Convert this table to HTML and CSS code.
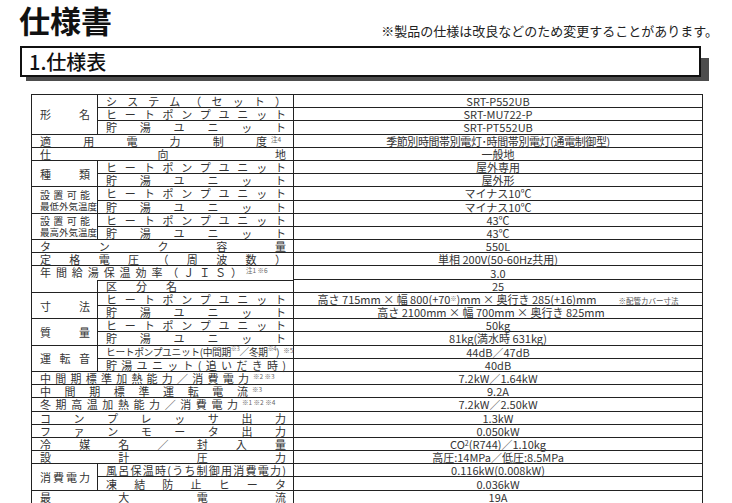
FILE: index.html
```html
<!DOCTYPE html>
<html lang="ja">
<head>
<meta charset="utf-8">
<title>仕様書</title>
<link rel="stylesheet" href="styles.css">
</head>
<body>
<header class="top">
  <h1 class="title">仕様書</h1>
  <p class="notice">※製品の仕様は改良などのため変更することがあります。</p>
</header>
<h2 class="section">1.仕様表</h2>
<div class="spec">
  <div class="c r3"><span class="j">形名</span></div>
  <div class="c"><span class="j">システム（セット）</span></div>
  <div class="c v">SRT-P552UB</div>
  <div class="c"><span class="j">ヒートポンプユニット</span></div>
  <div class="c v">SRT-MU722-P</div>
  <div class="c"><span class="j">貯湯ユニット</span></div>
  <div class="c v">SRT-PT552UB</div>

  <div class="c w"><span class="j">適用電力制度</span><span class="n n19">注4</span></div>
  <div class="c v"><span class="cond">季節別時間帯別電灯･時間帯別電灯(通電制御型)</span></div>

  <div class="c w"><span class="j">仕向地</span></div>
  <div class="c v">一般地</div>

  <div class="c r2"><span class="j">種類</span></div>
  <div class="c"><span class="j">ヒートポンプユニット</span></div>
  <div class="c v">屋外専用</div>
  <div class="c"><span class="j">貯湯ユニット</span></div>
  <div class="c v">屋外形</div>

  <div class="c r2 two"><span class="j a">設置可能</span><span class="j b">最低外気温度</span></div>
  <div class="c"><span class="j">ヒートポンプユニット</span></div>
  <div class="c v">マイナス10℃</div>
  <div class="c"><span class="j">貯湯ユニット</span></div>
  <div class="c v">マイナス10℃</div>

  <div class="c r2 two"><span class="j a">設置可能</span><span class="j b">最高外気温度</span></div>
  <div class="c"><span class="j">ヒートポンプユニット</span></div>
  <div class="c v">43℃</div>
  <div class="c"><span class="j">貯湯ユニット</span></div>
  <div class="c v">43℃</div>

  <div class="c w"><span class="j">タンク容量</span></div>
  <div class="c v">550L</div>

  <div class="c w"><span class="j">定格電圧（周波数）</span></div>
  <div class="c v">単相 200V(50-60Hz共用)</div>

  <div class="c w nb"><span class="j">年間給湯保温効率（ＪＩＳ）</span><span class="n n44">注1 ※6</span></div>
  <div class="c v">3.0</div>
  <div class="c"></div>
  <div class="c kb"><span class="sp">区分名</span></div>
  <div class="c v">25</div>

  <div class="c r2"><span class="j">寸法</span></div>
  <div class="c"><span class="j">ヒートポンプユニット</span></div>
  <div class="c v">高さ 715mm × 幅 800(+70<sup>※</sup>)mm × 奥行き 285(+16)mm<span class="pipe">※配管カバー寸法</span></div>
  <div class="c"><span class="j">貯湯ユニット</span></div>
  <div class="c v shift">高さ 2100mm × 幅 700mm × 奥行き 825mm</div>

  <div class="c r2"><span class="j">質量</span></div>
  <div class="c"><span class="j">ヒートポンプユニット</span></div>
  <div class="c v">50kg</div>
  <div class="c"><span class="j">貯湯ユニット</span></div>
  <div class="c v">81kg(満水時 631kg)</div>

  <div class="c r2"><span class="j">運転音</span></div>
  <div class="c"><span class="tight">ヒートポンプユニット(中間期<sup>※3</sup>／冬期<sup>※4</sup>)</span><span class="n n5">※5</span></div>
  <div class="c v">44dB／47dB</div>
  <div class="c"><span class="j">貯湯ユニット(追いだき時)</span></div>
  <div class="c v">40dB</div>

  <div class="c w"><span class="j">中間期標準加熱能力／消費電力</span><span class="n n37">※2 ※3</span></div>
  <div class="c v">7.2kW／1.64kW</div>
  <div class="c w"><span class="j">中間期標準運転電流</span><span class="n n38">※3</span></div>
  <div class="c v">9.2A</div>
  <div class="c w"><span class="j">冬期高温加熱能力／消費電力</span><span class="n n48">※1 ※2 ※4</span></div>
  <div class="c v">7.2kW／2.50kW</div>
  <div class="c w"><span class="j">コンプレッサ出力</span></div>
  <div class="c v">1.3kW</div>
  <div class="c w"><span class="j">ファンモータ出力</span></div>
  <div class="c v">0.050kW</div>
  <div class="c w"><span class="j">冷媒名／封入量</span></div>
  <div class="c v">CO<sub>2</sub>(R744)／1.10kg</div>
  <div class="c w"><span class="j">設計圧力</span></div>
  <div class="c v">高圧:14MPa／低圧:8.5MPa</div>

  <div class="c r2"><span class="j">消費電力</span></div>
  <div class="c"><span class="j">風呂保温時(うち制御用消費電力)</span></div>
  <div class="c v">0.116kW(0.008kW)</div>
  <div class="c"><span class="j">凍結防止ヒータ</span></div>
  <div class="c v">0.036kW</div>

  <div class="c w"><span class="j">最大電流</span></div>
  <div class="c v">19A</div>
</div>
</body>
</html>
```

FILE: styles.css
```css
* {
  box-sizing: border-box;
  margin: 0;
  padding: 0;
}

html {
  background: #fff;
}

body {
  width: 732px;
  font-family: "Noto Sans CJK JP", "Noto Sans", sans-serif;
  color: #222;
}

.top {
  display: flex;
  align-items: flex-start;
  height: 40px;
  padding: 0 14px 0 19px;
}

.title {
  font-size: 31px;
  line-height: 40px;
  font-weight: 700;
  color: #111;
}

.notice {
  margin-left: auto;
  margin-top: 24px;
  font-size: 13px;
  line-height: 13px;
  color: #222;
}

.section {
  position: relative;
  margin: 6px 0 0 20px;
  width: 681px;
  height: 31px;
  border: 2px solid #111;
  background: #fff;
  padding-left: 7px;
  font-size: 20px;
  line-height: 27px;
  font-weight: 500;
  color: #111;
}

.section::before {
  content: "";
  position: absolute;
  left: 4px;
  top: 10px;
  right: -10px;
  bottom: -6px;
  background: #4d4d4d;
  z-index: -1;
}

.spec {
  display: grid;
  grid-template-columns: 66px 196px 409px;
  grid-template-rows: repeat(31, 13.2px);
  width: 672px;
  margin: 17px 0 0 31px;
  border-top: 1px solid #222;
  border-left: 1px solid #222;
  font-size: 11px;
  line-height: 12px;
  color: #333;
}

.c {
  display: flex;
  align-items: center;
  min-width: 0;
  padding: 0 7px 0 8px;
  border-right: 1px solid #222;
  border-bottom: 1px solid #222;
  white-space: nowrap;
}

.r2 { grid-row: span 2; }
.r3 { grid-row: span 3; }
.w { grid-column: span 2; }
.nb { border-bottom: none; align-items: flex-start; }
.kb { border-top: 1px solid #222; }

.j {
  flex: 1;
  text-align: justify;
  text-align-last: justify;
}

.two {
  flex-direction: column;
  align-items: stretch;
  justify-content: center;
}

.two .j {
  flex: none;
}

.two .a {
  font-size: 10px;
  line-height: 12px;
}

.two .b {
  font-size: 9.5px;
  line-height: 11px;
}

.n {
  flex: none;
  align-self: flex-start;
  padding: 1px 0 0 4px;
  font-size: 6.5px;
  line-height: 7px;
  color: #666;
}

.n19 { width: 19px; }
.n44 { width: 44px; }
.n37 { width: 37px; }
.n38 { width: 38px; }
.n48 { width: 48px; }
.n5 { margin-left: auto; }

.sp {
  letter-spacing: 19px;
}

.tight {
  font-size: 9.75px;
  letter-spacing: -0.35px;
}

.cond {
  letter-spacing: -0.4px;
}

sup {
  font-size: 6px;
  line-height: 1;
  vertical-align: top;
  color: #666;
}

sub {
  font-size: 7px;
  line-height: 1;
  vertical-align: -1px;
}

.v {
  justify-content: center;
  padding: 0 4px;
}

.shift {
  padding-right: 18px;
}

.pipe {
  align-self: flex-end;
  margin-left: 22px;
  font-size: 7.5px;
  line-height: 9px;
  color: #555;
}
```
